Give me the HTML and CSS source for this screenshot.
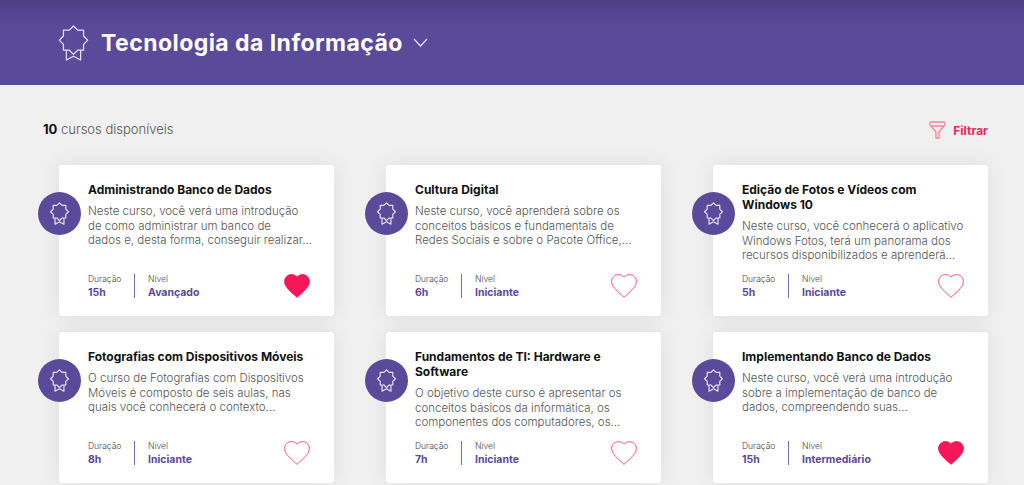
FILE: index.html
```html
<!DOCTYPE html>
<html lang="pt-BR">
<head>
<meta charset="UTF-8">
<meta name="viewport" content="width=device-width, initial-scale=1.0">
<title>Tecnologia da Informação</title>
<link rel="stylesheet" href="styles.css">
</head>
<body>
<svg class="sprites" aria-hidden="true">
    <symbol id="badge" viewBox="0 -1 32 38">
        <polygon points="16,0 20.4,4.4 26.6,4.4 26.6,10.6 31,15 26.6,19.4 26.6,25.6 20.4,25.6 16,30 11.6,25.6 5.4,25.6 5.4,19.4 1,15 5.4,10.6 5.4,4.4 11.6,4.4"/>
        <path d="M8.5 25.6V36L16 32L23.5 36V25.6"/>
    </symbol>
    <symbol id="heart" viewBox="1.5 2.5 21 19.4">
        <path d="M12 21.35l-1.45-1.32C5.4 15.36 2 12.28 2 8.5 2 5.42 4.42 3 7.5 3c1.74 0 3.41.81 4.5 2.09C13.09 3.81 14.76 3 16.5 3 19.58 3 22 5.42 22 8.5c0 3.78-3.4 6.86-8.55 11.54L12 21.35z"/>
    </symbol>
</svg>

<header class="topbar">
    <svg class="topbar-icon"><use href="#badge"/></svg>
    <h1>Tecnologia da Informação</h1>
    <svg class="chevron" viewBox="0 0 15 9"><path d="M1 1L7.5 8L14 1"/></svg>
</header>

<main class="content">
    <div class="toolbar">
        <p class="count"><b>10</b> cursos disponíveis</p>
        <a class="filter">
            <svg class="filter-icon" viewBox="0 0 17 18"><path d="M2 1H15Q16 1 16 2V4Q16 5 15 5H2Q1 5 1 4V2Q1 1 2 1ZM2 5L7 11V17H10V11L15 5"/></svg>
            Filtrar
        </a>
    </div>

    <div class="courses">
        <article class="card">
            <span class="card-badge"><svg><use href="#badge"/></svg></span>
            <h3>Administrando Banco de Dados</h3>
            <p class="desc">Neste curso, você verá uma introdução<br>de como administrar um banco de<br>dados e, desta forma, conseguir realizar...</p>
            <div class="meta">
                <div class="meta-item dur"><span>Duração</span><b>15h</b></div>
                <div class="meta-item"><span>Nível</span><b>Avançado</b></div>
                <svg class="heart on"><use href="#heart"/></svg>
            </div>
        </article>
        <article class="card">
            <span class="card-badge"><svg><use href="#badge"/></svg></span>
            <h3>Cultura Digital</h3>
            <p class="desc">Neste curso, você aprenderá sobre os<br>conceitos básicos e fundamentais de<br>Redes Sociais e sobre o Pacote Office,...</p>
            <div class="meta">
                <div class="meta-item dur"><span>Duração</span><b>6h</b></div>
                <div class="meta-item"><span>Nível</span><b>Iniciante</b></div>
                <svg class="heart"><use href="#heart"/></svg>
            </div>
        </article>
        <article class="card">
            <span class="card-badge"><svg><use href="#badge"/></svg></span>
            <h3>Edição de Fotos e Vídeos com<br>Windows 10</h3>
            <p class="desc">Neste curso, você conhecerá o aplicativo<br>Windows Fotos, terá um panorama dos<br>recursos disponibilizados e aprenderá...</p>
            <div class="meta">
                <div class="meta-item dur"><span>Duração</span><b>5h</b></div>
                <div class="meta-item"><span>Nível</span><b>Iniciante</b></div>
                <svg class="heart"><use href="#heart"/></svg>
            </div>
        </article>
        <article class="card">
            <span class="card-badge"><svg><use href="#badge"/></svg></span>
            <h3>Fotografias com Dispositivos Móveis</h3>
            <p class="desc">O curso de Fotografias com Dispositivos<br>Móveis é composto de seis aulas, nas<br>quais você conhecerá o contexto...</p>
            <div class="meta">
                <div class="meta-item dur"><span>Duração</span><b>8h</b></div>
                <div class="meta-item"><span>Nível</span><b>Iniciante</b></div>
                <svg class="heart"><use href="#heart"/></svg>
            </div>
        </article>
        <article class="card">
            <span class="card-badge"><svg><use href="#badge"/></svg></span>
            <h3>Fundamentos de TI: Hardware e<br>Software</h3>
            <p class="desc">O objetivo deste curso é apresentar os<br>conceitos básicos da informática, os<br>componentes dos computadores, os...</p>
            <div class="meta">
                <div class="meta-item dur"><span>Duração</span><b>7h</b></div>
                <div class="meta-item"><span>Nível</span><b>Iniciante</b></div>
                <svg class="heart"><use href="#heart"/></svg>
            </div>
        </article>
        <article class="card">
            <span class="card-badge"><svg><use href="#badge"/></svg></span>
            <h3>Implementando Banco de Dados</h3>
            <p class="desc">Neste curso, você verá uma introdução<br>sobre a implementação de banco de<br>dados, compreendendo suas...</p>
            <div class="meta">
                <div class="meta-item dur"><span>Duração</span><b>15h</b></div>
                <div class="meta-item"><span>Nível</span><b>Intermediário</b></div>
                <svg class="heart on"><use href="#heart"/></svg>
            </div>
        </article>
    </div>
</main>
</body>
</html>
```

FILE: styles.css
```css
html, body {
    height: 100%;
}
body {
    font-family: Inter, "Open Sans", sans-serif;
    margin: 0;
    padding: 0;
    background-color: #f0f0f0;
    color: #111;
    overflow: hidden;
}
.sprites {
    display: none;
}

/* topo */
.topbar {
    height: 85px;
    padding-left: 58px;
    box-sizing: border-box;
    display: flex;
    align-items: center;
    background: linear-gradient(#4d3f85, #5a4a9a 28px);
    color: #fff;
}
.topbar-icon {
    width: 31px;
    height: 36px;
    margin-right: 12px;
    fill: none;
    stroke: #e6e2f4;
    stroke-width: 1.3;
    stroke-linejoin: round;
}
.topbar h1 {
    font-size: 23px;
    font-weight: 700;
    margin: 0;
    letter-spacing: 0.45px;
}
.chevron {
    width: 15px;
    height: 9px;
    margin-left: 10px;
    fill: none;
    stroke: #e6e2f4;
    stroke-width: 1.2;
}

/* lista */
.content {
    padding: 0 36px 0 43px;
}
.toolbar {
    height: 80px;
    display: flex;
    justify-content: space-between;
    align-items: center;
}
.count {
    margin: 0;
    font-size: 13px;
    font-weight: 300;
    color: #555;
    position: relative;
    top: 4px;
}
.count b {
    font-weight: 700;
    color: #111;
}
.filter {
    display: flex;
    align-items: center;
    gap: 7px;
    font-size: 12px;
    font-weight: 700;
    color: #f5235f;
    position: relative;
    top: 5px;
}
.filter-icon {
    width: 17px;
    height: 18px;
    fill: none;
    stroke: #f8809f;
    stroke-width: 1.3;
}
.courses {
    display: grid;
    grid-template-columns: repeat(3, 275px);
    column-gap: 52px;
    row-gap: 16px;
    margin-left: 16px;
}
.card {
    position: relative;
    height: 151px;
    box-sizing: border-box;
    padding: 17px 24px 18px 29px;
    display: flex;
    flex-direction: column;
    background-color: #fff;
    border-radius: 3px;
    box-shadow: 0 0 22px rgba(0, 0, 0, 0.08);
}
.card-badge {
    position: absolute;
    left: -21px;
    top: 27px;
    width: 43px;
    height: 43px;
    display: flex;
    align-items: center;
    justify-content: center;
    border-radius: 50%;
    background-color: #5a4a9a;
}
.card-badge svg {
    width: 19px;
    height: 23px;
    fill: none;
    stroke: #e6e2f4;
    stroke-width: 2;
    stroke-linejoin: round;
}
.card h3 {
    margin: 0 0 7px;
    font-size: 12px;
    line-height: 15px;
    font-weight: 700;
    white-space: nowrap;
}
.desc {
    margin: 0;
    font-size: 11.5px;
    line-height: 14.7px;
    font-weight: 300;
    color: #555;
    white-space: nowrap;
}
.meta {
    margin-top: auto;
    display: flex;
    align-items: flex-end;
}
.meta-item {
    display: flex;
    flex-direction: column;
    gap: 3px;
    height: 24px;
}
.meta-item span {
    font-size: 8.5px;
    line-height: 10px;
    font-weight: 300;
    color: #444;
}
.meta-item b {
    font-size: 10.5px;
    line-height: 12px;
    font-weight: 700;
    color: #5a4a9a;
}
.dur {
    width: 46px;
    margin-right: 13px;
    border-right: 1px solid #7a6cb0;
}
.heart {
    width: 26px;
    height: 24px;
    margin-left: auto;
    fill: #fff;
    stroke: #f7507f;
    stroke-width: 0.8;
}
.heart.on {
    fill: #f5175a;
    stroke: #f5175a;
}
```
